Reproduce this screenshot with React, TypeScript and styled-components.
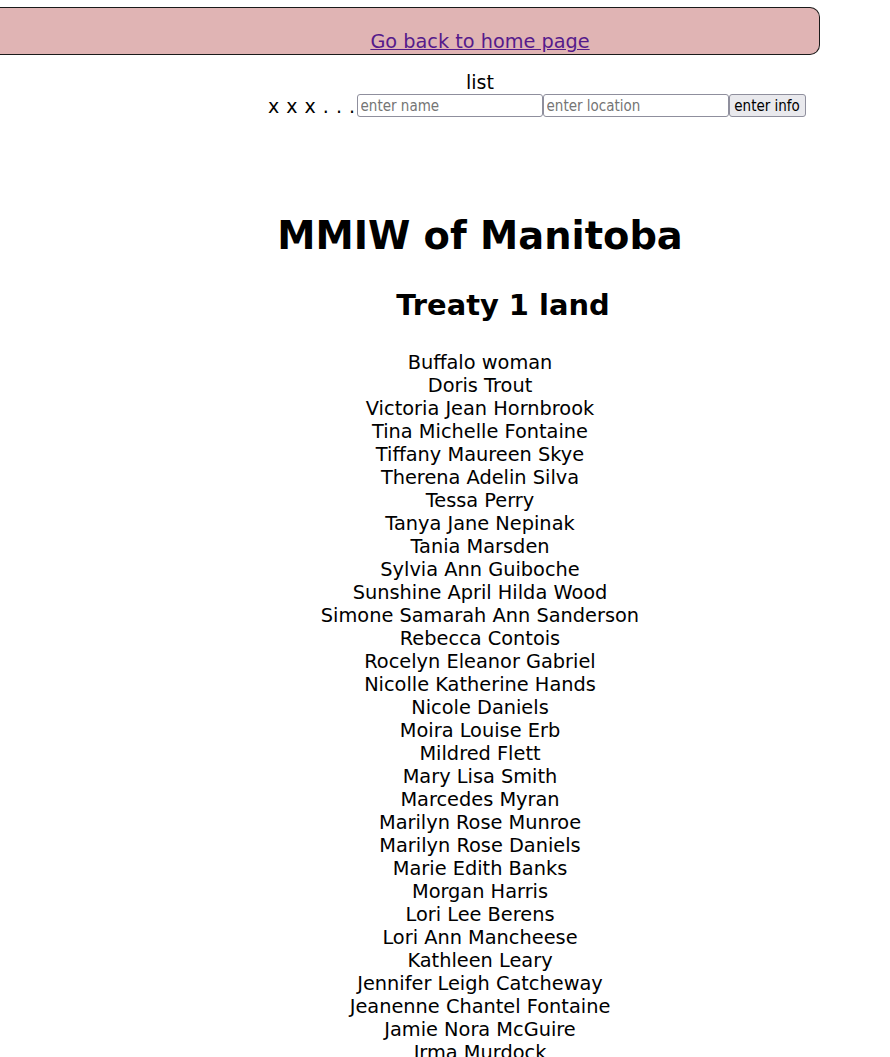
import React from "react";
import styled, { createGlobalStyle } from "styled-components";

const Global = createGlobalStyle`
  html { overflow-x: hidden; }
  body {
    margin: 7px 8px 8px 0;
    background: #ffffff;
    color: #000000;
    font-family: "DejaVu Sans", Verdana, sans-serif;
  }
`;

const Banner = styled.div`
  margin: 0 62px 0 0;
  height: 46px;
  border: 1px solid #1a1a1a;
  border-left: none;
  border-radius: 0 10px 10px 0;
  background: #e0b4b4;
  display: flex;
  align-items: flex-end;
  justify-content: center;
  padding-left: 141px;
  box-sizing: content-box;
`;

const HomeLink = styled.a`
  color: #551a8b;
  font-size: 19.3px;
  line-height: 22px;
  margin-bottom: 1px;
  text-decoration: underline;
`;

const Page = styled.div`
  padding-left: 78px;
  text-align: center;
`;

const ListLabel = styled.div`
  margin-top: 16px;
  font-size: 19px;
  line-height: 22px;
`;

const FormRow = styled.div`
  display: flex;
  align-items: center;
  margin-left: 268px;
  height: 25px;
`;

const Xs = styled.span`
  font-size: 19px;
  letter-spacing: 0.5px;
  margin-right: 1px;
`;

const Field = styled.input`
  width: 186px;
  height: 23px;
  box-sizing: border-box;
  border: 1px solid #8f8f9d;
  border-radius: 3px;
  padding: 1px 3px;
  font-family: "DejaVu Sans Condensed", "DejaVu Sans", sans-serif;
  font-size: 15px;
  background: #fff;
  &::placeholder { color: #757575; }
`;

const Button = styled.button`
  width: 77px;
  height: 23px;
  box-sizing: border-box;
  border: 1px solid #8f8f9d;
  border-radius: 3px;
  background: #e9e9ed;
  font-family: "DejaVu Sans Condensed", "DejaVu Sans", sans-serif;
  font-size: 15px;
  padding: 0 3px;
  color: #000;
`;

const Title = styled.h1`
  font-size: 38.4px;
  font-weight: bold;
  margin: 94px 0 0;
  line-height: 48px;
`;

const Subtitle = styled.h2`
  font-size: 28.9px;
  font-weight: bold;
  margin: 27px 0 0 46px;
  line-height: 36px;
`;

const Names = styled.div`
  margin-top: 28px;
  font-size: 19.35px;
  line-height: 23px;
`;

const Name = styled.div``;

const names = [
  "Buffalo woman",
  "Doris Trout",
  "Victoria Jean Hornbrook",
  "Tina Michelle Fontaine",
  "Tiffany Maureen Skye",
  "Therena Adelin Silva",
  "Tessa Perry",
  "Tanya Jane Nepinak",
  "Tania Marsden",
  "Sylvia Ann Guiboche",
  "Sunshine April Hilda Wood",
  "Simone Samarah Ann Sanderson",
  "Rebecca Contois",
  "Rocelyn Eleanor Gabriel",
  "Nicolle Katherine Hands",
  "Nicole Daniels",
  "Moira Louise Erb",
  "Mildred Flett",
  "Mary Lisa Smith",
  "Marcedes Myran",
  "Marilyn Rose Munroe",
  "Marilyn Rose Daniels",
  "Marie Edith Banks",
  "Morgan Harris",
  "Lori Lee Berens",
  "Lori Ann Mancheese",
  "Kathleen Leary",
  "Jennifer Leigh Catcheway",
  "Jeanenne Chantel Fontaine",
  "Jamie Nora McGuire",
  "Irma Murdock",
];

export default function App() {
  return (
    <>
      <Global />
      <Banner>
        <HomeLink href="#">Go back to home page</HomeLink>
      </Banner>
      <Page>
        <ListLabel>list</ListLabel>
      </Page>
      <FormRow>
        <Xs>x x x . . .</Xs>
        <Field placeholder="enter name" />
        <Field placeholder="enter location" />
        <Button>enter info</Button>
      </FormRow>
      <Page>
        <Title>MMIW of Manitoba</Title>
        <Subtitle>Treaty 1 land</Subtitle>
        <Names>
          {names.map((n) => (
            <Name key={n}>{n}</Name>
          ))}
        </Names>
      </Page>
    </>
  );
}
